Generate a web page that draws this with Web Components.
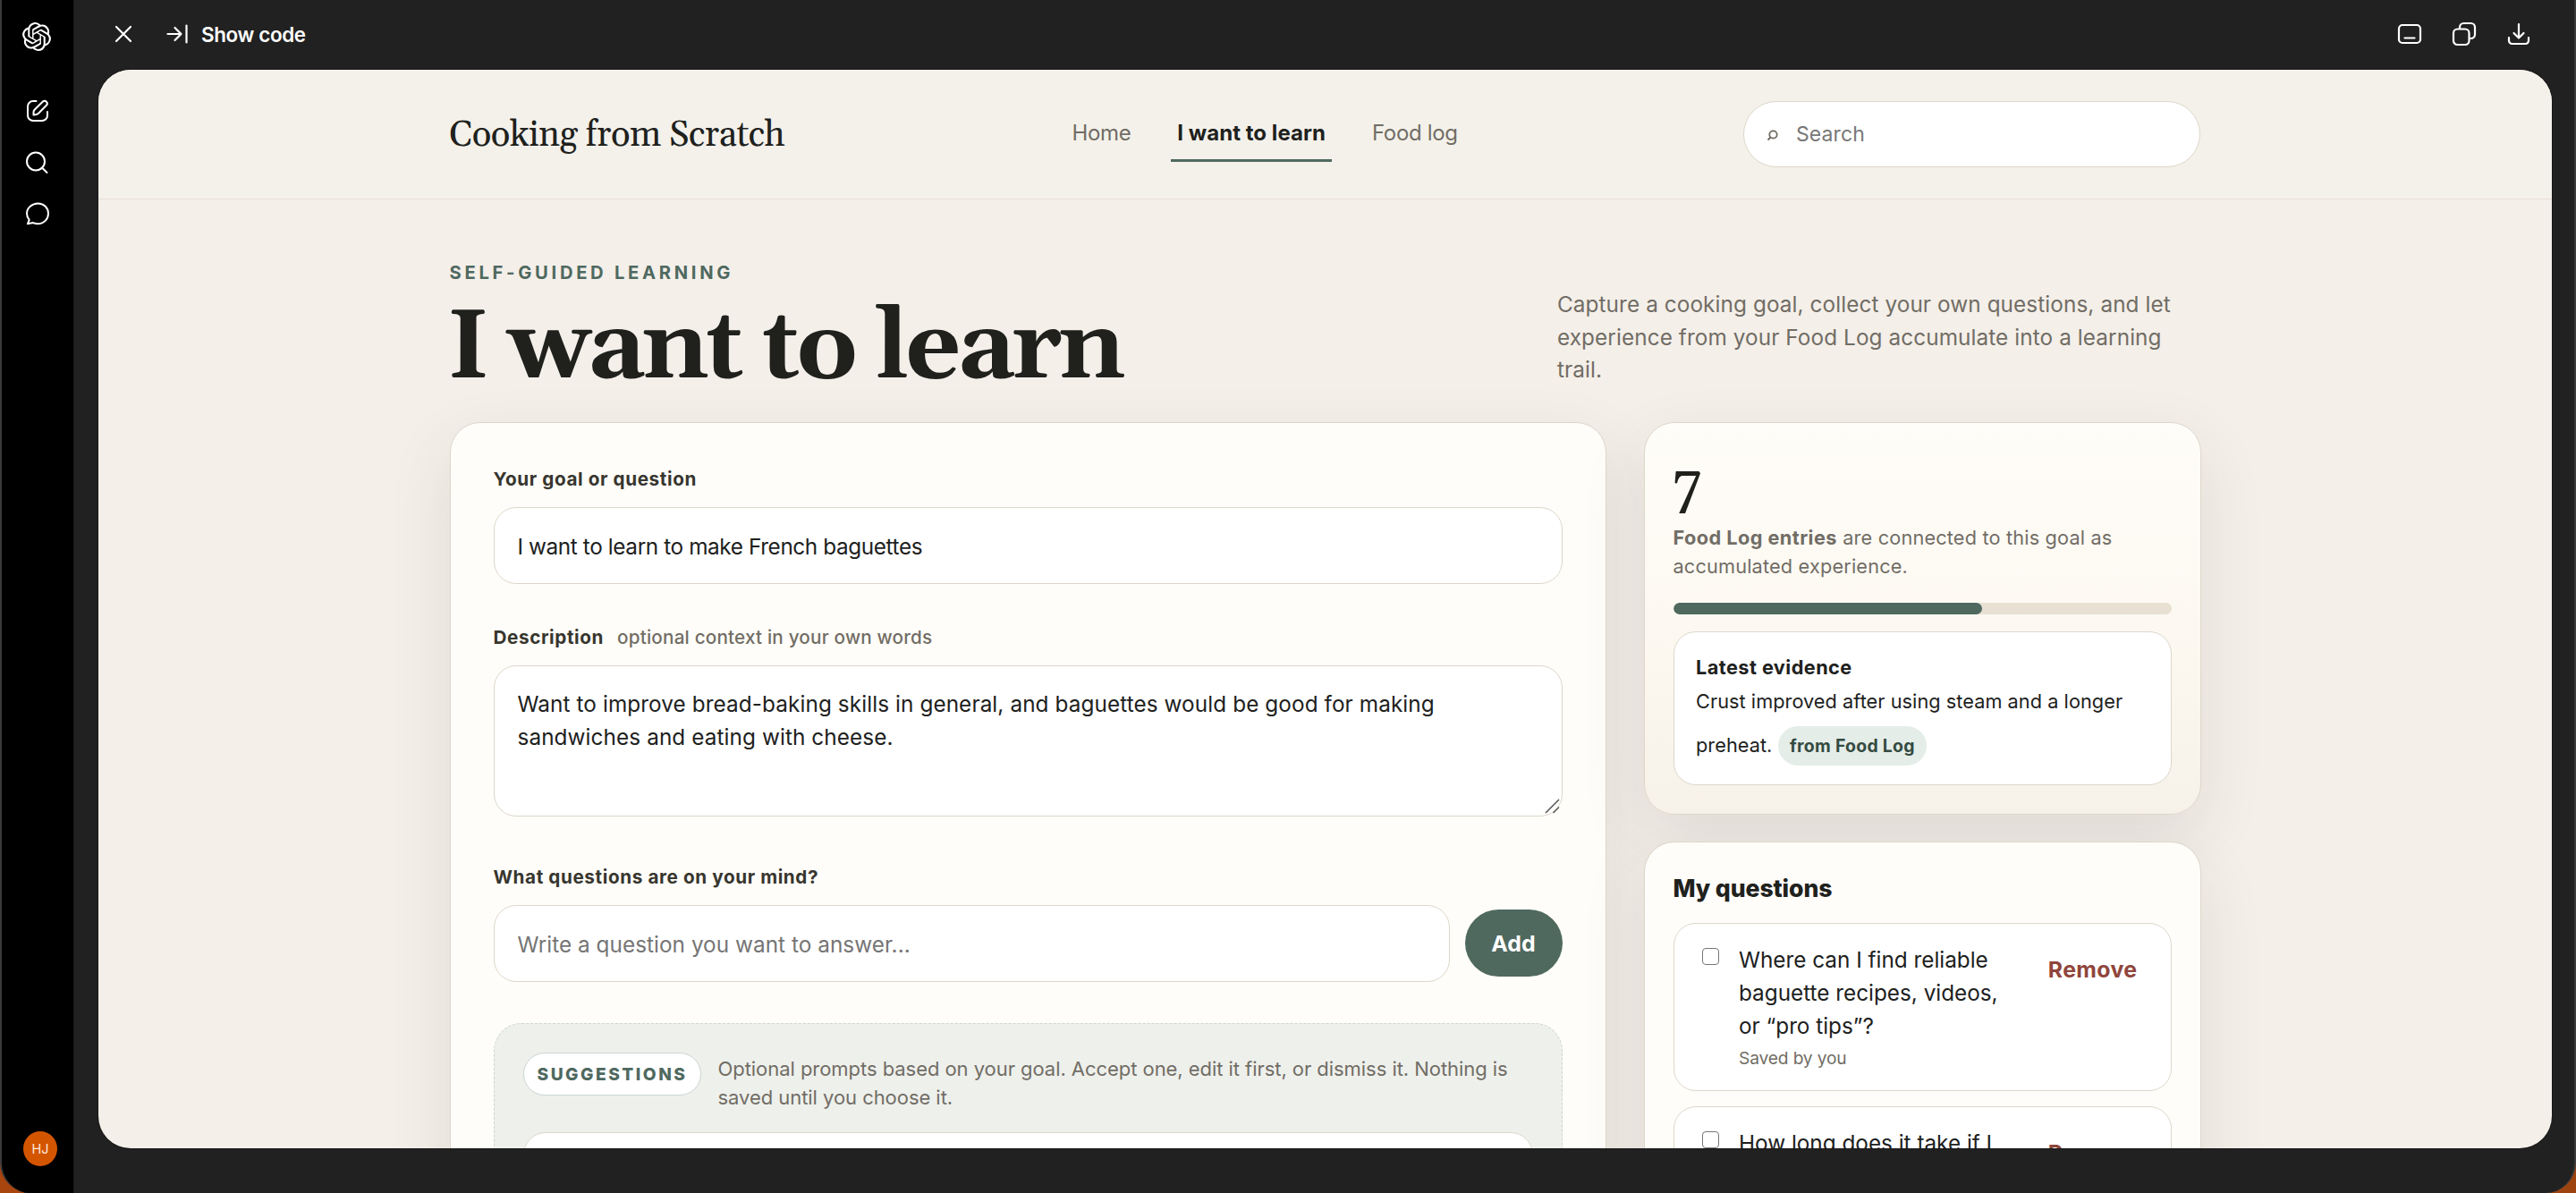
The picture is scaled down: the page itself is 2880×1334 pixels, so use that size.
<!DOCTYPE html>
<html lang="en">
<head>
<meta charset="utf-8">
<title>Cooking from Scratch</title>
<style>
    html, body { margin: 0; height: 100%; overflow: hidden; }
    body {
        --ink: #20211d;
        --muted: #716d65;
        --line: #ddd7ca;
        --green: #4f695f;
        --paper: #fffdf9;
        --serif: Gelasio, "Liberation Serif", serif;
        background: linear-gradient(90deg, #a8440d, #9c4310);
        color: var(--ink);
        font-family: Inter, "Open Sans", sans-serif;
        font-size: 24.3px;
        letter-spacing: 0.1px;
    }
    goal-progress b { letter-spacing: 0.45px; }
</style>
</head>
<body>

<app-window>
    <side-rail slot="rail" initials="HJ"></side-rail>
    <tool-bar slot="bar">Show code</tool-bar>
    <site-header>
        <span slot="brand">Cooking from Scratch</span>
        <nav-link>Home</nav-link>
        <nav-link active>I want to learn</nav-link>
        <nav-link>Food log</nav-link>
    </site-header>
    <page-hero>
        <span slot="eyebrow">SELF-GUIDED LEARNING</span>
        <span slot="title">I want to learn</span>
        Capture a cooking goal, collect your own questions, and let experience from your Food Log accumulate into a learning trail.
    </page-hero>
    <page-columns>
        <panel-card slot="main" class="goal">
            <form-field>
                <span slot="label">Your goal or question</span>
                <text-box tight>I want to learn to make French baguettes</text-box>
            </form-field>
            <form-field style="margin-top: 44.5px">
                <span slot="label">Description</span>
                <span slot="hint">optional context in your own words</span>
                <text-box multiline>Want to improve bread-baking skills in general, and baguettes would be good for making sandwiches and eating with cheese.</text-box>
            </form-field>
            <form-field style="margin-top: 53px">
                <span slot="label">What questions are on your mind?</span>
                <text-box placeholder>Write a question you want to answer...</text-box>
                <pill-button>Add</pill-button>
            </form-field>
            <suggestion-box>
                <span slot="badge">SUGGESTIONS</span>
                Optional prompts based on your goal. Accept one, edit it first, or dismiss it. Nothing is saved until you choose it.
            </suggestion-box>
        </panel-card>
        <panel-card slot="side" warm>
            <goal-progress count="7" percent="62">
                <span slot="summary"><b>Food Log entries</b> are connected to this goal as accumulated experience.</span>
                <span slot="title">Latest evidence</span>
                Crust improved after using steam and a longer preheat.
                <span slot="source">from Food Log</span>
            </goal-progress>
        </panel-card>
        <panel-card slot="side">
            <question-list>
                <span slot="title">My questions</span>
                <question-item>Where can I find reliable baguette recipes, videos, or “pro tips”?</question-item>
                <question-item>How long does it take if I</question-item>
            </question-list>
        </panel-card>
    </page-columns>
</app-window>

<script>
// Attaches an open shadow root with the given markup.
class BaseElement extends HTMLElement {
    constructor() {
        super();
        this.attachShadow({ mode: 'open' });
    }

    connectedCallback() {
        this.shadowRoot.innerHTML = this.render();
    }
}

class AppWindow extends BaseElement {
    render() {
        return `<style>
            :host {
                display: grid;
                grid-template-columns: 80px 1fr;
                grid-template-rows: 78px 1fr 50px;
                box-sizing: border-box;
                height: 100vh;
                background: #212121;
                border: solid #3b3b3b;
                border-width: 0 2px;
                border-radius: 0 0 34px 34px;
                overflow: hidden;
            }
            slot[name=rail] { display: block; grid-row: 1 / 4; }
            slot[name=bar] { display: block; grid-column: 2; }
            .frame {
                grid-column: 2;
                margin: 0 25px 0 28px;
                background: #f4efe9;
                border-radius: 36px;
                box-shadow: 0 0 0 1px #181818;
                overflow: hidden;
                min-height: 0;
            }
        </style>
        <slot name="rail"></slot>
        <slot name="bar"></slot>
        <div class="frame"><slot></slot></div>`;
    }
}

class SideRail extends BaseElement {
    render() {
        return `<style>
            :host {
                display: flex;
                flex-direction: column;
                align-items: center;
                box-sizing: border-box;
                height: 1334px;
                padding: 25px 2px 30px 0;
                background: #000;
                box-shadow: 1px 0 0 #1a1a1a;
            }
            svg { flex: none; width: 32px; height: 32px; fill: none; stroke: #fff; stroke-width: 2; stroke-linecap: round; stroke-linejoin: round; }
            .logo { fill: #fff; stroke: none; margin-bottom: 51px; }
            .item { margin: 0 0 25.5px 2px; }
            .avatar {
                display: grid;
                place-items: center;
                width: 38px;
                height: 39px;
                margin: auto 0 0 8px;
                border-radius: 50%;
                background: #d45500;
                color: #ffe9dc;
                font-size: 14.5px;
                letter-spacing: 0;
            }
        </style>
        <svg class="logo" viewBox="0 0 24 24"><path d="M22.2819 9.8211a5.9847 5.9847 0 0 0-.5157-4.9108 6.0462 6.0462 0 0 0-6.5098-2.9A6.0651 6.0651 0 0 0 4.9807 4.1818a5.9847 5.9847 0 0 0-3.9977 2.9 6.0462 6.0462 0 0 0 .7427 7.0966 5.98 5.98 0 0 0 .511 4.9107 6.051 6.051 0 0 0 6.5146 2.9001A5.9847 5.9847 0 0 0 13.2599 24a6.0557 6.0557 0 0 0 5.7718-4.2058 5.9894 5.9894 0 0 0 3.9977-2.9001 6.0557 6.0557 0 0 0-.7475-7.0729zm-9.022 12.6081a4.4755 4.4755 0 0 1-2.8764-1.0408l.1419-.0804 4.7783-2.7582a.7948.7948 0 0 0 .3927-.6813v-6.7369l2.02 1.1686a.071.071 0 0 1 .038.052v5.5826a4.504 4.504 0 0 1-4.4945 4.4944zm-9.6607-4.1254a4.4708 4.4708 0 0 1-.5346-3.0137l.142.0852 4.783 2.7582a.7712.7712 0 0 0 .7806 0l5.8428-3.3685v2.3324a.0804.0804 0 0 1-.0332.0615L9.74 19.9502a4.4992 4.4992 0 0 1-6.1408-1.6464zM2.3408 7.8956a4.485 4.485 0 0 1 2.3655-1.9728V11.6a.7664.7664 0 0 0 .3879.6765l5.8144 3.3543-2.0201 1.1685a.0757.0757 0 0 1-.071 0l-4.8303-2.7865A4.504 4.504 0 0 1 2.3408 7.872zm16.5963 3.8558L13.1038 8.364 15.1192 7.2a.0757.0757 0 0 1 .071 0l4.8303 2.7913a4.4944 4.4944 0 0 1-.6765 8.1042v-5.6772a.79.79 0 0 0-.407-.667zm2.0107-3.0231l-.142-.0852-4.7735-2.7818a.7759.7759 0 0 0-.7854 0L9.409 9.2297V6.8974a.0662.0662 0 0 1 .0284-.0615l4.8303-2.7866a4.4992 4.4992 0 0 1 6.6802 4.66zM8.3065 12.863l-2.02-1.1638a.0804.0804 0 0 1-.038-.0567V6.0742a4.4992 4.4992 0 0 1 7.3757-3.4537l-.142.0805L8.704 5.459a.7948.7948 0 0 0-.3927.6813zm1.0976-2.3654l2.602-1.4998 2.6069 1.4998v2.9994l-2.5974 1.4997-2.6067-1.4997Z"/></svg>
        <svg class="item" viewBox="0 0 32 32"><path d="M14.5 5H11a6 6 0 0 0-6 6v10a6 6 0 0 0 6 6h10a6 6 0 0 0 6-6v-4M11.5 20.5v-3.2c0-1 .4-1.9 1.1-2.6L21.7 5.700a2.900 2.900 0 0 1 4.200 0 2.900 2.900 0 0 1 0 4.100L17 18.700c-.7.7-1.600 1.200-2.600 1.400z"/></svg>
        <svg class="item" viewBox="0 0 32 32"><circle cx="14" cy="14.5" r="10"/><path d="M21.200 21.700 26.500 27"/></svg>
        <svg class="item" viewBox="0 0 32 32"><path d="M16.5 4.500c6.600 0 11.500 5 11.500 11.300s-5 11.500-11.700 11.500c-2.200 0-3.700-.5-5.200-1.200L5 27.200l1.700-4.400C5 20.800 4 18.500 4 15.800 4 9.500 9.800 4.500 16.500 4.500z"/></svg>
        <div class="avatar">${this.getAttribute('initials')}</div>`;
    }
}

class ToolBar extends BaseElement {
    render() {
        return `<style>
            :host {
                display: flex;
                align-items: center;
                height: 76px;
                padding: 0 47px 0 45px;
                color: #fff;
                font-size: 22.4px;
                font-weight: 600;
                letter-spacing: -0.35px;
            }
            svg { width: 30px; height: 30px; fill: none; stroke: #fff; stroke-width: 2.2; stroke-linecap: round; stroke-linejoin: round; }
            .expand { margin: 0 10px 0 28px; }
            .actions { display: flex; gap: 31px; margin-left: auto; }
        </style>
        <svg viewBox="0 0 30 30"><path d="M3 7 19 23M19 7 3 23"/></svg>
        <svg class="expand" viewBox="0 0 30 30"><path d="M2.500 15h15M10.500 8l7 7-7 7M23.500 5.500v19"/></svg>
        <slot></slot>
        <div class="actions">
            <svg viewBox="0 0 30 30"><rect x="3" y="5" width="24" height="20" rx="4"/><path d="M9.500 19.500h11"/></svg>
            <svg viewBox="0 0 30 30"><rect x="3" y="9.500" width="17.500" height="17.500" rx="4.500"/><path d="M10 9V7.500A4.500 4.500 0 0 1 14.500 3h8A4.500 4.500 0 0 1 27 7.500v8a4.500 4.500 0 0 1-4.500 4.500H21"/></svg>
            <svg viewBox="0 0 30 30"><path d="M15 4v15.500M9.500 14l5.500 5.500 5.500-5.500M4 19v3.500A3.500 3.500 0 0 0 7.500 26h15a3.500 3.500 0 0 0 3.500-3.500V19"/></svg>
        </div>`;
    }
}

class SiteHeader extends BaseElement {
    render() {
        return `<style>
            :host {
                display: flex;
                align-items: center;
                justify-content: space-between;
                height: 144px;
                padding: 0 392.5px;
                background: #f4f1ea;
                border-bottom: 1px solid #e5dfd6;
            }
            .brand { width: 376.5px; padding-top: 4px; font: 40px/56px var(--serif); letter-spacing: -0.45px; white-space: nowrap; }
            nav { display: flex; gap: 38px; }
            .search {
                display: flex;
                align-items: center;
                gap: 18px;
                box-sizing: border-box;
                width: 511.5px;
                height: 74px;
                padding-left: 24px;
                background: #fff;
                border: 1px solid var(--line);
                border-radius: 37px;
                color: #777;
                font-size: 23px;
            }
            svg { width: 16px; height: 16px; fill: none; stroke: #6f695f; stroke-width: 1.8; }
        </style>
        <div class="brand"><slot name="brand"></slot></div>
        <nav><slot></slot></nav>
        <div class="search">
            <svg viewBox="0 0 16 16"><circle cx="8.500" cy="8.500" r="4.200"/><path d="M5.500 11.500 2.500 14.500"/></svg>
            Search
        </div>`;
    }
}

class NavLink extends BaseElement {
    render() {
        return `<style>
            :host {
                padding: 11px 7px;
                border-bottom: 3px solid transparent;
                color: var(--muted);
                font-size: 24px;
                line-height: 36px;
                letter-spacing: -0.35px;
                white-space: nowrap;
            }
            :host([active]) { color: var(--ink); font-weight: 700; letter-spacing: 0.05px; border-color: var(--green); }
        </style><slot></slot>`;
    }
}

class PageHero extends BaseElement {
    render() {
        return `<style>
            :host {
                display: flex;
                justify-content: space-between;
                align-items: flex-end;
                padding: 68px 392.5px 29px;
            }
            .eyebrow { color: var(--green); font-size: 20.2px; font-weight: 700; line-height: 28px; letter-spacing: 3.7px; }
            h1 { margin: 20px 0 0 -3px; font: 700 108px/104px var(--serif); letter-spacing: -3.75px; white-space: nowrap; }
            p { width: 719.5px; margin: 0 0 11px; color: var(--muted); line-height: 36.7px; }
        </style>
        <div>
            <div class="eyebrow"><slot name="eyebrow"></slot></div>
            <h1><slot name="title"></slot></h1>
        </div>
        <p><slot></slot></p>`;
    }
}

class PageColumns extends BaseElement {
    render() {
        return `<style>
            :host {
                display: grid;
                grid-template-columns: 1293px 1fr;
                gap: 42px;
                align-items: start;
                padding: 0 392.5px;
            }
            div { display: grid; gap: 30px; }
        </style>
        <div><slot name="main"></slot></div>
        <div><slot name="side"></slot></div>`;
    }
}

class PanelCard extends BaseElement {
    render() {
        return `<style>
            :host {
                display: block;
                box-sizing: border-box;
                padding: 32px;
                background: var(--paper);
                border: 1px solid var(--line);
                border-radius: 34px;
                box-shadow: 0 26px 72px rgba(50, 45, 35, 0.1);
            }
            :host(.goal) { padding: 48px; }
            :host([warm]) { background: linear-gradient(180deg, #fffdf9, #fcf8f0 60%, #f6f1e9); }
        </style><slot></slot>`;
    }
}

class FormField extends BaseElement {
    render() {
        return `<style>
            :host { display: block; }
            label { display: flex; gap: 15px; margin-bottom: 16px; color: #37362f; font-size: 20.7px; font-weight: 700; line-height: 30px; letter-spacing: 0.6px; }
            slot[name=hint] { color: var(--muted); font-weight: 500; letter-spacing: 0.18px; }
            .control { display: flex; align-items: center; gap: 16.5px; }
        </style>
        <label><slot name="label"></slot><slot name="hint"></slot></label>
        <div class="control"><slot></slot></div>`;
    }
}

class TextBox extends BaseElement {
    render() {
        const grip = this.hasAttribute('multiline')
            ? '<svg viewBox="0 0 18 18"><path d="M1 16 16 1M9.500 16l6.500-6.500"/></svg>'
            : '';
        return `<style>
            :host {
                position: relative;
                display: flex;
                align-items: center;
                flex: 1;
                box-sizing: border-box;
                height: 86px;
                padding: 2px 26px 0;
                background: #fff;
                border: 1px solid var(--line);
                border-radius: 25px;
            }
            :host([tight]) { letter-spacing: -0.38px; }
            :host([placeholder]) { color: #757575; letter-spacing: 0.05px; }
            :host([multiline]) { align-items: flex-start; height: 169px; padding: 24px 100px 0 26px; line-height: 37px; }
            svg { position: absolute; right: 1px; bottom: 1px; width: 18px; height: 18px; stroke: #555; stroke-width: 1.5; fill: none; }
        </style><slot></slot>${grip}`;
    }
}

class PillButton extends BaseElement {
    render() {
        return `<style>
            :host {
                display: grid;
                place-items: center;
                width: 109px;
                height: 75px;
                border-radius: 37.5px;
                background: var(--green);
                color: #fff;
                font-size: 24.8px;
                font-weight: 700;
            }
        </style><slot></slot>`;
    }
}

class SuggestionBox extends BaseElement {
    render() {
        return `<style>
            :host {
                display: block;
                height: 400px;
                margin-top: 46px;
                padding: 32px;
                background: #eef0ec;
                border: 1px dashed #cdd6cf;
                border-radius: 31px;
            }
            .head { display: flex; align-items: flex-start; gap: 19px; color: var(--muted); font-size: 22px; line-height: 32.5px; letter-spacing: -0.05px; }
            .badge {
                flex: none;
                box-sizing: border-box;
                width: 199px;
                padding-left: 15px;
                background: #fff;
                border: 1px solid #cbd6d1;
                border-radius: 24px;
                color: var(--green);
                font-size: 19.2px;
                font-weight: 800;
                line-height: 46px;
                letter-spacing: 2.5px;
            }
            p { margin: 2px 0 0; }
            .item { height: 160px; margin-top: 22px; background: #fff; border: 1px solid var(--line); border-radius: 25px; }
        </style>
        <div class="head">
            <div class="badge"><slot name="badge"></slot></div>
            <p><slot></slot></p>
        </div>
        <div class="item"></div>`;
    }
}

class GoalProgress extends BaseElement {
    render() {
        return `<style>
            :host { display: block; font-size: 21.7px; letter-spacing: 0.06px; }
            .count { font: 63px/80px var(--serif); font-variant-numeric: oldstyle-nums; }
            p { margin: 0; color: var(--muted); line-height: 32.3px; letter-spacing: 0.18px; }
            .bar { height: 13px; margin: 24px 0 19.5px; background: #e8e0d3; border-radius: 7px; overflow: hidden; }
            .fill { width: ${this.getAttribute('percent')}%; height: 100%; background: var(--green); border-radius: 7px; }
            .evidence { box-sizing: border-box; height: 172px; padding: 20px 24.5px; background: #fff; border: 1px solid var(--line); border-radius: 25px; line-height: 38px; }
            .evidence b { display: block; letter-spacing: 0.45px; }
            .source {
                display: inline-block;
                margin-top: 9px;
                padding: 0 13.5px;
                background: #e5ede8;
                border-radius: 22px;
                color: #344b42;
                font-size: 19.4px;
                font-weight: 700;
                line-height: 44px;
                letter-spacing: 0.3px;
            }
        </style>
        <div class="count">${this.getAttribute('count')}</div>
        <p><slot name="summary"></slot></p>
        <div class="bar"><div class="fill"></div></div>
        <div class="evidence">
            <b><slot name="title"></slot></b>
            <slot></slot>
            <span class="source"><slot name="source"></slot></span>
        </div>`;
    }
}

class QuestionList extends BaseElement {
    render() {
        return `<style>
            :host { display: block; height: 560px; }
            h2 { margin: 1px 0 21px; font-size: 26.6px; font-weight: 800; line-height: 36px; letter-spacing: -0.1px; }
            div { display: grid; gap: 17px; }
        </style>
        <h2><slot name="title"></slot></h2>
        <div><slot></slot></div>`;
    }
}

class QuestionItem extends BaseElement {
    render() {
        return `<style>
            :host {
                display: flex;
                align-items: flex-start;
                box-sizing: border-box;
                height: 188px;
                padding: 22px 37px 0 31px;
                background: #fff;
                border: 1px solid var(--line);
                border-radius: 25px;
                line-height: 36.7px;
                letter-spacing: 0;
            }
            .check { flex: none; box-sizing: border-box; width: 19px; height: 19px; margin: 5px 22.5px 0 0; border: 1.5px solid #767676; border-radius: 4px; }
            .body { width: 300px; }
            small { display: block; margin-top: 3px; color: var(--muted); font-size: 19.2px; line-height: 30px; letter-spacing: -0.15px; }
            .remove { margin: 11px 0 0 auto; color: #8f453b; font-size: 24.8px; font-weight: 700; letter-spacing: 0.4px; }
        </style>
        <span class="check"></span>
        <div class="body"><slot></slot><small>Saved by you</small></div>
        <span class="remove">Remove</span>`;
    }
}

customElements.define('app-window', AppWindow);
customElements.define('side-rail', SideRail);
customElements.define('tool-bar', ToolBar);
customElements.define('site-header', SiteHeader);
customElements.define('nav-link', NavLink);
customElements.define('page-hero', PageHero);
customElements.define('page-columns', PageColumns);
customElements.define('panel-card', PanelCard);
customElements.define('form-field', FormField);
customElements.define('text-box', TextBox);
customElements.define('pill-button', PillButton);
customElements.define('suggestion-box', SuggestionBox);
customElements.define('goal-progress', GoalProgress);
customElements.define('question-list', QuestionList);
customElements.define('question-item', QuestionItem);
</script>
</body>
</html>
